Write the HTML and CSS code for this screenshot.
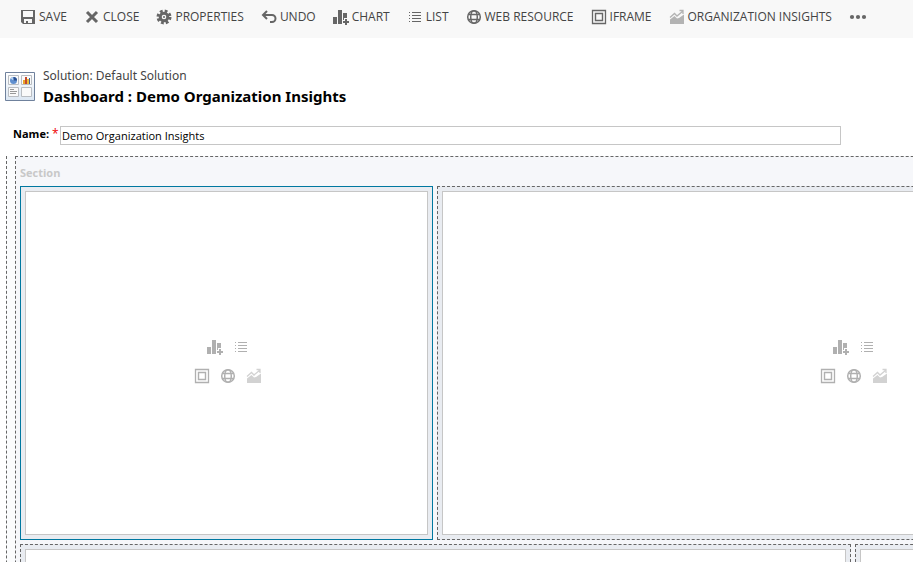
FILE: index.html
```html
<!DOCTYPE html>
<html lang="en">
<head>
<meta charset="utf-8">
<title>Dashboard: Demo Organization Insights</title>
<link rel="stylesheet" href="styles.css">
</head>
<body>
<svg class="sprite" aria-hidden="true">
  <symbol id="save" viewBox="0 0 16 16"><path fill="currentColor" fill-rule="evenodd" d="M1 1h14v14H3l-2-2zM3 2v6h10V2zM4 10v4h2v-2h2v2h4v-4z"/></symbol>
  <symbol id="close" viewBox="0 0 16 16"><path d="M3 3l10 10M13 3L3 13" stroke="currentColor" stroke-width="3"/></symbol>
  <symbol id="gear" viewBox="0 0 16 16"><circle cx="8" cy="8" r="6" fill="none" stroke="currentColor" stroke-width="3" stroke-dasharray="2.7 2.01"/><circle cx="8" cy="8" r="3.8" fill="none" stroke="currentColor" stroke-width="3"/><circle cx="8" cy="8" r="1" fill="currentColor"/></symbol>
  <symbol id="undo" viewBox="0 0 16 16"><path d="M6 2L2 6l4 4M2.500 6H11a3.500 3.500 0 0 1 0 7H9" fill="none" stroke="currentColor" stroke-width="2"/></symbol>
  <symbol id="chart" viewBox="0 0 16 16"><path fill="currentColor" d="M0 8h4v7H0zM5 1h4v14H5zM10 4h4v5h-3v2h-1zM12 10h2v2h2v2h-2v2h-2v-2h-2v-2h2z"/></symbol>
  <symbol id="list" viewBox="0 0 16 16"><path d="M2 3.500h1M2 6.500h1M2 9.500h1M2 12.500h1M5 3.500h9M5 6.500h9M5 9.500h9M5 12.500h9" stroke="currentColor"/></symbol>
  <symbol id="globe" viewBox="0 0 16 16"><g fill="none" stroke="currentColor" stroke-width="1.500"><circle cx="8" cy="8" r="6.300"/><ellipse cx="8" cy="8" rx="3.300" ry="6.300"/><path d="M2.500 5.500h11M2.500 10.500h11"/></g></symbol>
  <symbol id="frame" viewBox="0 0 16 16"><g fill="none" stroke="currentColor"><path d="M1.500 1.500h13v13h-13z" stroke-width="1.300"/><path d="M4.500 4.500h7v7h-7z" stroke-width="1.400"/></g></symbol>
  <symbol id="insights" viewBox="0 0 16 16"><path d="M1 8.500l4.500-4 2.500 2.500 6-5M10.500 1.500H14V5" fill="none" stroke="currentColor" stroke-width="1.300"/><path fill="currentColor" d="M1 15v-4.500l4.500-3.500L8 9.500l2-.5 5-3.500V15z"/></symbol>
  <symbol id="more" viewBox="0 0 18 16"><g fill="currentColor"><circle cx="3" cy="8" r="2.100"/><circle cx="9" cy="8" r="2.100"/><circle cx="15" cy="8" r="2.100"/></g></symbol>
</svg>

<nav class="toolbar" aria-label="Commands">
  <button class="command" type="button"><svg class="icon"><use href="#save"/></svg>SAVE</button>
  <button class="command" type="button"><svg class="icon"><use href="#close"/></svg>CLOSE</button>
  <button class="command" type="button"><svg class="icon"><use href="#gear"/></svg>PROPERTIES</button>
  <button class="command" type="button"><svg class="icon"><use href="#undo"/></svg>UNDO</button>
  <button class="command" type="button"><svg class="icon"><use href="#chart"/></svg>CHART</button>
  <button class="command" type="button"><svg class="icon"><use href="#list"/></svg>LIST</button>
  <button class="command" type="button"><svg class="icon"><use href="#globe"/></svg>WEB RESOURCE</button>
  <button class="command" type="button"><svg class="icon"><use href="#frame"/></svg>IFRAME</button>
  <button class="command" type="button"><svg class="icon pale"><use href="#insights"/></svg>ORGANIZATION INSIGHTS</button>
  <button class="command" type="button" aria-label="More commands"><svg class="icon wide"><use href="#more"/></svg></button>
</nav>

<header class="heading">
  <svg class="emblem" viewBox="0 0 30 29" aria-hidden="true">
    <defs><linearGradient id="sheen" x2="0" y2="1"><stop stop-color="#fff"/><stop offset="1" stop-color="#dce7f3"/></linearGradient></defs>
    <path d="M.5.5h29v28H.5z" fill="url(#sheen)" stroke="#6f819c"/>
    <path d="M3.500 3.500h10v9h-10zM16.500 3.500h10v9h-10zM3.500 15.500h10v9h-10zM16.500 15.500h10v9h-10z" fill="#fafafa" stroke="#b9bdc2"/>
    <circle cx="8.500" cy="8.500" r="3.500" fill="#5f8fcf"/><path d="M8.500 8.500V5A3.500 3.500 0 0 1 12 8.500z" fill="#294f91"/><path d="M8.500 8.500L5.500 6.500 8 5z" fill="#b8d4f2"/>
    <path d="M18 8h2v4h-2z" fill="#e8a62a"/><path d="M20 5h2v7h-2z" fill="#c4492d"/><path d="M22 7h2v5h-2z" fill="#edbd38"/><path d="M24 6h1v6h-1z" fill="#405d9c"/>
    <path d="M5 17.500h4M5 19.500h7M5 21.500h6" stroke="#999"/>
  </svg>
  <div>
    <p class="solution">Solution: Default Solution</p>
    <h1 class="title">Dashboard : Demo Organization Insights</h1>
  </div>
</header>

<form class="name-row">
  <label class="name-label" for="name">Name:</label><span class="required">*</span>
  <input class="name-input" id="name" type="text" value="Demo Organization Insights" required>
</form>

<main class="canvas">
  <section class="section">
    <h2 class="section-title">Section</h2>
    <div class="cells">
      <div class="cell selected"><div class="pane">
        <div class="tools"><button type="button" aria-label="Chart"><svg class="icon"><use href="#chart"/></svg></button><button type="button" aria-label="List"><svg class="icon"><use href="#list"/></svg></button></div>
        <div class="tools"><button type="button" aria-label="IFrame"><svg class="icon"><use href="#frame"/></svg></button><button type="button" aria-label="Web resource"><svg class="icon"><use href="#globe"/></svg></button><button type="button" aria-label="Organization insights"><svg class="icon faint"><use href="#insights"/></svg></button></div>
      </div></div>
      <div class="cell double"><div class="pane">
        <div class="tools"><button type="button" aria-label="Chart"><svg class="icon"><use href="#chart"/></svg></button><button type="button" aria-label="List"><svg class="icon"><use href="#list"/></svg></button></div>
        <div class="tools"><button type="button" aria-label="IFrame"><svg class="icon"><use href="#frame"/></svg></button><button type="button" aria-label="Web resource"><svg class="icon"><use href="#globe"/></svg></button><button type="button" aria-label="Organization insights"><svg class="icon faint"><use href="#insights"/></svg></button></div>
      </div></div>
      <div class="cell double"><div class="pane"></div></div>
      <div class="cell"><div class="pane"></div></div>
    </div>
  </section>
</main>
</body>
</html>
```
FILE: styles.css
```css
* { box-sizing: border-box; }

body {
  margin: 0;
  height: 100vh;
  overflow: hidden;
  background: #fff;
  color: #000;
  font: 11px/16px "Open Sans", "Noto Sans", sans-serif;
}

h1, h2, p { margin: 0; }

button {
  padding: 0;
  border: 0;
  background: none;
  color: inherit;
  font: inherit;
  cursor: pointer;
}

.sprite { position: absolute; width: 0; height: 0; }
.icon { width: 16px; height: 16px; flex: none; display: block; }

.toolbar {
  display: flex;
  gap: 17px;
  height: 38px;
  padding: 0 20px 4px;
  background: #f8f8f8;
  color: #444;
  font-size: 12px;
}

.command {
  display: flex;
  align-items: center;
  gap: 3px;
  white-space: nowrap;
}

.command .icon { color: #666; }
.command .pale { color: #b3b3b3; }
.command .wide { width: 18px; }

.heading {
  display: flex;
  align-items: center;
  gap: 8px;
  padding: 28px 5px 0;
  font-family: "Noto Sans", "Open Sans", sans-serif;
}

.emblem { width: 30px; height: 29px; flex: none; }
.solution { color: #444; font-size: 12px; line-height: 20px; }
.title { font-size: 15px; line-height: 20px; font-weight: 700; }

.name-row {
  display: flex;
  padding: 20px 72px 0 13px;
}

.name-label { width: 39px; font-weight: 700; }
.required { width: 8px; color: #e00; font-size: 12px; }

.name-input {
  flex: 1;
  min-width: 0;
  height: 19px;
  padding: 0 1px;
  border: 1px solid #c6c6c6;
  background: #fff;
  color: #000;
  font: inherit;
}

.canvas {
  width: max-content;
  margin: 11px 0 0 6px;
  padding-left: 8px;
  border-left: 1px dashed #666;
  background: #fbfcfd;
}

.section {
  padding: 0 4px 4px;
  border: 1px dashed #666;
  background: #f6f7fa;
}

.section-title {
  padding: 8px 0 5px;
  color: #c8c8c8;
  font-size: 11px;
  line-height: 16px;
}

.cells {
  display: grid;
  grid-template-columns: 413px 414px 414px;
  grid-auto-rows: 354px;
  gap: 4px;
}

.cell {
  display: flex;
  padding: 4px;
  border: 1px dashed #666;
  background: #e9ecf1;
}

.double { grid-column: span 2; }
.selected { border: 1px solid #0078a0; }

.pane {
  flex: 1;
  display: flex;
  flex-direction: column;
  align-items: center;
  justify-content: center;
  gap: 13px;
  padding: 0 0 4px 2px;
  border: 1px solid #c6c6c6;
  background: #fff;
  color: #b0b0b0;
}

.tools { display: flex; gap: 10px; }
.faint { color: #d2d2d2; }
```
